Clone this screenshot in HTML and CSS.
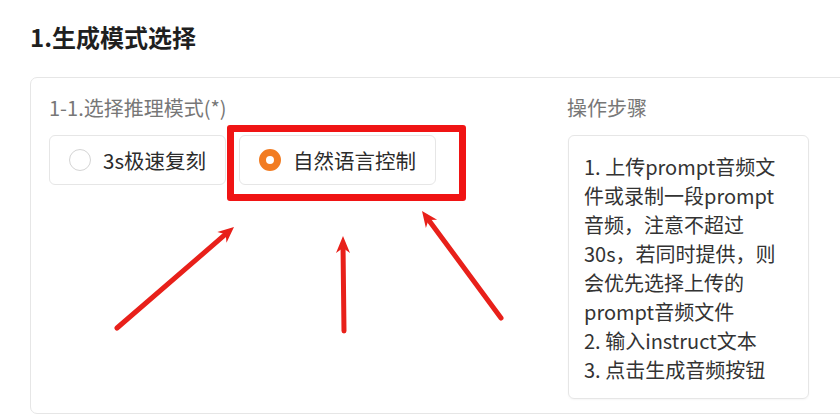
FILE: index.html
```html
<!DOCTYPE html>
<html lang="zh-CN">
<head>
<meta charset="utf-8">
<title>生成模式选择</title>
<link rel="stylesheet" href="styles.css">
</head>
<body>
<div class="page">
  <h2 class="title">1.生成模式选择</h2>
  <div class="card">
    <div class="col-left">
      <div class="label">1-1.选择推理模式(*)</div>
      <div class="radios">
        <label class="radio"><span class="dot"></span><span class="rtext">3s极速复刻</span></label>
        <label class="radio"><span class="dot checked"></span><span class="rtext">自然语言控制</span></label>
      </div>
    </div>
    <div class="col-right">
      <div class="label">操作步骤</div>
      <div class="steps">1. 上传prompt音频文<br>件或录制一段prompt<br>音频，注意不超过<br>30s，若同时提供，则<br>会优先选择上传的<br>prompt音频文件<br>2. 输入instruct文本<br>3. 点击生成音频按钮</div>
    </div>
  </div>
  <div class="highlight"></div>
  <svg class="arrows" width="840" height="418" viewBox="0 0 840 418">
    <g stroke="#e8201a" stroke-width="5" stroke-linecap="round" fill="none">
      <line x1="117" y1="328" x2="227.9" y2="232.2"/>
      <line x1="344" y1="331" x2="343" y2="244"/>
      <line x1="501" y1="318" x2="426.8" y2="217.4"/>
    </g>
    <g fill="#e8201a">
      <polygon points="234,227 226.5,242.7 225.7,234.2 217.3,232.1"/>
      <polygon points="343,236 350,253 343,248 336,253"/>
      <polygon points="422,211 437.1,219.7 428.5,219.9 425.9,228.1"/>
    </g>
  </svg>
</div>
</body>
</html>
```
FILE: styles.css
```css
html, body {
  margin: 0;
  padding: 0;
  background: #ffffff;
  overflow: hidden;
}
body {
  font-family: "Noto Sans CJK SC", "Noto Sans", sans-serif;
  width: 840px;
  height: 418px;
}
.page {
  position: relative;
  width: 840px;
  height: 418px;
  padding: 21px 0 0 30px;
  box-sizing: border-box;
}
.title {
  margin: 0;
  font-size: 24px;
  line-height: 32px;
  font-weight: 700;
  color: #1f1f1f;
}
.card {
  margin-top: 24px;
  width: 840px;
  height: 337px;
  box-sizing: border-box;
  border: 1px solid #e6e6e6;
  border-radius: 7px;
  padding: 18px 0 0 18px;
  display: grid;
  grid-template-columns: 501px 241px;
  column-gap: 18px;
  align-items: start;
}
.label {
  font-size: 20px;
  line-height: 24px;
  color: #777777;
  margin-bottom: 15px;
}
.radios {
  display: flex;
  gap: 13px;
}
.radio {
  display: flex;
  align-items: center;
  gap: 12px;
  height: 50px;
  box-sizing: border-box;
  padding: 0 19px 0 19px;
  border: 1px solid #e6e6e6;
  border-radius: 6px;
  background: #fff;
}
.dot {
  width: 22px;
  height: 22px;
  box-sizing: border-box;
  border-radius: 50%;
  border: 1px solid #d4d4d4;
  background: #fff;
}
.dot.checked {
  border: 7px solid #f27c22;
  background: #fff;
}
.rtext {
  font-size: 20.5px;
  color: #2b2b2b;
}
.col-right .label {
  margin-left: -1px;
}
.steps {
  width: 241px;
  height: 264px;
  box-sizing: border-box;
  border: 1px solid #e6e6e6;
  border-radius: 6px;
  padding: 16px 0 0 15px;
  font-size: 20px;
  line-height: 29px;
  color: #333333;
  white-space: nowrap;
  box-shadow: 0 1px 2px rgba(0,0,0,0.04);
}
.highlight {
  position: absolute;
  left: 227px;
  top: 125px;
  width: 239px;
  height: 76px;
  box-sizing: border-box;
  border: 7px solid #f01414;
  border-radius: 3px;
}
.arrows {
  position: absolute;
  left: 0;
  top: 0;
}
```
